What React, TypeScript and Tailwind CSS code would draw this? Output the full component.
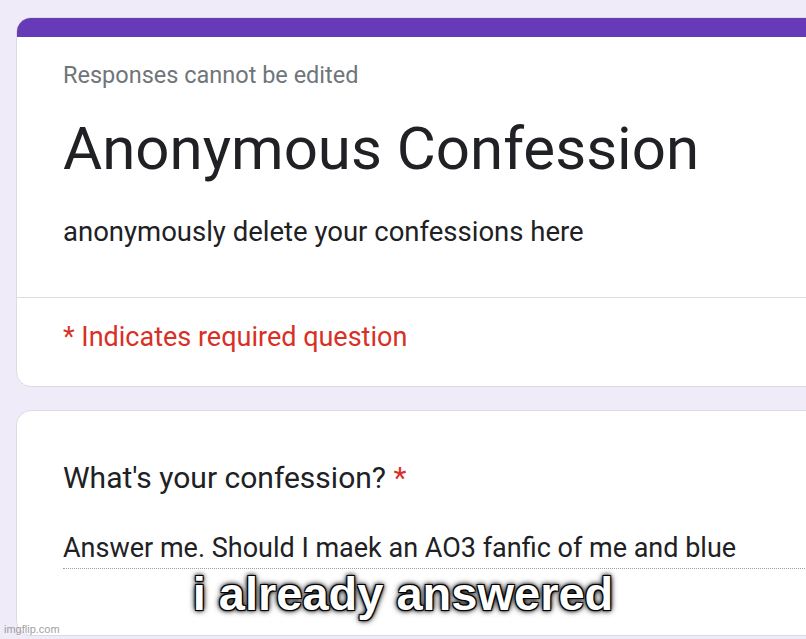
import React from 'react';

const FormHeader: React.FC = () => (
  <div className="w-[850px] ml-4 mt-[17px] rounded-[15px] border border-[#dadce0] bg-white overflow-hidden">
    <div className="h-[19px] bg-[#673ab7]" />
    <div className="pl-[46px] pt-[24px] pb-[48px]">
      <p className="text-[23.5px] leading-[28px] text-[#70757a]">Responses cannot be edited</p>
      <h1 className="mt-[22px] text-[60px] leading-[76px] text-[#202124]">Anonymous Confession</h1>
      <p className="mt-[28px] text-[27.5px] leading-[34px] text-[#202124]">anonymously delete your confessions here</p>
    </div>
    <div className="border-t border-[#dadce0] pl-[46px] pt-[22px] pb-[32px]">
      <p className="text-[27px] leading-[34px] text-[#d93025]">* Indicates required question</p>
    </div>
  </div>
);

const QuestionCard: React.FC = () => (
  <div className="w-[850px] ml-4 mt-[23px] rounded-[15px] border border-[#dadce0] bg-white pl-[46px] pt-[49px] pb-[66px]">
    <p className="text-[30px] leading-[36px] text-[#202124]">
      What's your confession? <span className="text-[#d93025]">*</span>
    </p>
    <div className="mt-[36px] border-b border-dotted border-[#9aa0a6]">
      <p className="text-[27px] leading-[32px] pb-[4px] text-[#202124]">
        Answer me. Should I maek an AO3 fanfic of me and blue
      </p>
    </div>
  </div>
);

export default function App() {
  return (
    <div className="relative w-[806px] h-[639px] overflow-hidden bg-[#f0ebf8] font-['Roboto',sans-serif]">
      <FormHeader />
      <QuestionCard />
      {/* meme caption */}
      <div className="absolute left-0 right-0 top-[566px] text-center">
        <span className="font-['Liberation_Sans',Arial,sans-serif] font-bold text-[47px] leading-[56px] text-white [text-shadow:_1px_1px_0_#000,_-1px_-1px_0_#000,_1px_-1px_0_#000,_-1px_1px_0_#000,_0_0_3px_#000,_0_0_5px_#000,_0_0_7px_#000]">
          i already answered
        </span>
      </div>
      <div className="absolute left-[4px] top-[622px] font-['Liberation_Sans',Arial,sans-serif] text-[11px] leading-[14px] text-[#8a8a8a] opacity-80">
        imgflip.com
      </div>
    </div>
  );
}
